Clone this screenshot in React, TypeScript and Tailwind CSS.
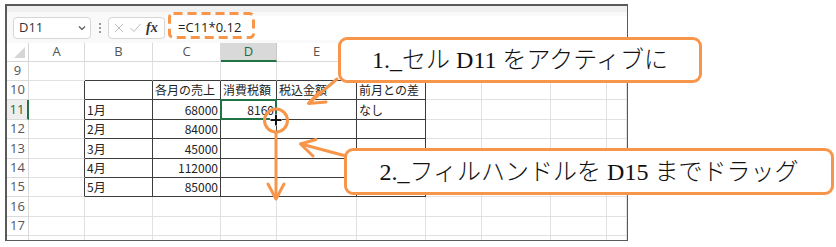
import React from "react";

const ORANGE = "#F7964A";
const colLabels = ["A", "B", "C", "D", "E", "F", "G", "H", "I", ""];
const rows = [9, 10, 11, 12, 13, 14, 15, 16, 17, 18];

type Cell = { text: string; align?: "left" | "right" };
const data: Record<string, Cell> = {
  "10-2": { text: "各月の売上" },
  "10-3": { text: "消費税額" },
  "10-4": { text: "税込金額" },
  "10-5": { text: "前月との差" },
  "11-1": { text: "1月" },
  "12-1": { text: "2月" },
  "13-1": { text: "3月" },
  "14-1": { text: "4月" },
  "15-1": { text: "5月" },
  "11-2": { text: "68000", align: "right" },
  "12-2": { text: "84000", align: "right" },
  "13-2": { text: "45000", align: "right" },
  "14-2": { text: "112000", align: "right" },
  "15-2": { text: "85000", align: "right" },
  "11-3": { text: "8160", align: "right" },
  "11-5": { text: "なし" },
};

function cellClasses(r: number, c: number) {
  const inTable = r >= 10 && r <= 15 && c >= 1 && c <= 5;
  const darkRight = inTable || (c === 0 && r >= 10 && r <= 15);
  const darkBottom = inTable || (r === 9 && c >= 1 && c <= 5);
  return [
    "relative border-r border-b flex items-center px-[2px] text-[12px] leading-none text-[#222] whitespace-nowrap overflow-visible",
    darkRight ? "border-r-[#3c3c3c]" : "border-r-[#e1e1e1]",
    darkBottom ? "border-b-[#3c3c3c]" : "border-b-[#e1e1e1]",
  ].join(" ");
}

export default function App() {
  return (
    <div className="relative w-[836px] h-[247px] bg-white overflow-hidden [font-family:'Noto_Sans_CJK_JP',sans-serif]">
      {/* spreadsheet window */}
      <div className="ml-[5px] mt-[4px] w-[623px] h-[237px] border-l-2 border-t-2 border-r border-b border-[#5a5a5a] flex flex-col overflow-hidden">
        {/* formula bar */}
        <div className="h-[37px] shrink-0 flex items-center bg-[#f9f9f9] border-t-[6px] border-[#f0f0f0]">
          <div className="ml-[6px] w-[78px] h-[22px] bg-white border border-[#d6d6d6] rounded-[4px] flex items-center justify-between pl-[5px] pr-[3px]">
            <span className="text-[13px] text-[#333] [font-family:'Open_Sans',sans-serif]">D11</span>
            <svg width="10" height="10" viewBox="0 0 10 10">
              <path d="M2 3.5 L5 6.5 L8 3.5" fill="none" stroke="#555" strokeWidth="1.2" />
            </svg>
          </div>
          <div className="ml-[7px] w-[3px] flex flex-col gap-[2px] items-center">
            <div className="w-[2px] h-[2px] bg-[#9a9a9a]" />
            <div className="w-[2px] h-[2px] bg-[#9a9a9a]" />
            <div className="w-[2px] h-[2px] bg-[#9a9a9a]" />
          </div>
          <div className="ml-[7px] w-[57px] h-[22px] bg-white border border-[#d6d6d6] rounded-[4px] flex items-center pl-[4px] gap-[4px]">
            <svg width="12" height="12" viewBox="0 0 12 12">
              <path d="M2 2 L10 10 M10 2 L2 10" stroke="#bdbdbd" strokeWidth="1" />
            </svg>
            <svg width="13" height="12" viewBox="0 0 13 12">
              <path d="M1.5 6 L5 9.5 L11.5 2" fill="none" stroke="#bdbdbd" strokeWidth="1" />
            </svg>
            <span className="text-[14px] italic font-semibold text-[#333] leading-none [font-family:'Liberation_Serif',serif]">fx</span>
          </div>
          <div className="ml-[2px] flex-1 h-[24px] bg-white flex items-center pl-[11px]">
            <span className="text-[13px] text-[#222] [font-family:'Open_Sans',sans-serif]">=C11*0.12</span>
          </div>
        </div>

        {/* grid */}
        <div className="h-[197px] overflow-hidden">
          <div className="grid grid-cols-[22px_56px_68px_68px_56px_80px_69px_56px_69px_56px_1fr] grid-rows-[19px_19px_19px_20px_19px_20px_19px_19px_20px_19px_20px]">
            {/* corner */}
            <div className="border-r border-b border-[#d4d4d4] bg-white relative">
              <svg className="absolute right-[3px] bottom-[3px]" width="11" height="11" viewBox="0 0 11 11">
                <path d="M11 0 L11 11 L0 11 Z" fill="#d6d6d6" />
              </svg>
            </div>
            {colLabels.map((l, i) =>
              i === 3 ? (
                <div key={l + i} className="bg-[#d9d9d9] border-r border-[#c8c8c8] border-b-2 border-b-[#217346] flex items-center justify-center text-[13px] text-[#1e6b3f] [font-family:'Open_Sans',sans-serif]">
                  {l}
                </div>
              ) : (
                <div key={l + i} className="bg-white border-r border-b border-[#dadada] flex items-center justify-center text-[13px] text-[#555] [font-family:'Open_Sans',sans-serif]">
                  {l}
                </div>
              )
            )}
            {rows.map((r) => (
              <React.Fragment key={r}>
                {r === 11 ? (
                  <div className="bg-[#eeeeee] border-r-2 border-r-[#217346] border-b border-b-[#dadada] flex items-center justify-center text-[13px] text-[#1e6b3f] [font-family:'Open_Sans',sans-serif]">
                    {r}
                  </div>
                ) : (
                  <div className="bg-white border-r border-b border-[#dadada] flex items-center justify-center text-[13px] text-[#555] [font-family:'Open_Sans',sans-serif]">
                    {r === 18 ? "" : r}
                  </div>
                )}
                {colLabels.map((_, c) => {
                  const d = data[`${r}-${c}`];
                  return (
                    <div
                      key={c}
                      className={cellClasses(r, c) + (d && d.align === "right" ? " justify-end" : "")}
                    >
                      {d ? d.text : ""}
                      {r === 11 && c === 3 ? (
                        <div className="absolute left-[-1px] top-[-1px] right-[-1px] bottom-[-1px] border-2 border-[#217346]" />
                      ) : null}
                    </div>
                  );
                })}
              </React.Fragment>
            ))}
          </div>
        </div>
      </div>

      {/* overlay drawings */}
      <svg className="absolute left-0 top-0 pointer-events-none" width="836" height="247" viewBox="0 0 836 247">
        {/* dashed highlight on formula */}
        <rect x="169.5" y="13.5" width="84" height="24" rx="4" fill="none" stroke={ORANGE} strokeWidth="3" strokeDasharray="9 5" />
        {/* arrow 1 */}
        <path d="M337 79 L309 103" stroke={ORANGE} strokeWidth="3" fill="none" strokeLinecap="round" />
        <path d="M319 92 L308.5 103.5 L326 102" stroke={ORANGE} strokeWidth="3" fill="none" strokeLinecap="round" strokeLinejoin="round" />
        {/* arrow 2 */}
        <path d="M346 156 L301 144" stroke={ORANGE} strokeWidth="3" fill="none" strokeLinecap="round" />
        <path d="M316 139.5 L300.5 144 L313 156" stroke={ORANGE} strokeWidth="3" fill="none" strokeLinecap="round" strokeLinejoin="round" />
        {/* circle + vertical arrow */}
        <circle cx="276" cy="120.5" r="11.5" fill="none" stroke={ORANGE} strokeWidth="3" />
        <path d="M276 132 L276 199" stroke={ORANGE} strokeWidth="3" fill="none" />
        <path d="M268 184 L276 199 L284 184" stroke={ORANGE} strokeWidth="3" fill="none" strokeLinecap="round" strokeLinejoin="round" />
        {/* fill cursor */}
        <path d="M276 114 L276 126 M270 120 L282 120" stroke="#ffffff" strokeWidth="4.5" />
        <path d="M276 114.5 L276 125.5 M270.5 120 L281.5 120" stroke="#111" strokeWidth="2" />
      </svg>

      {/* callout 1 */}
      <div className="absolute left-[338px] top-[37px] w-[364px] h-[46px] bg-white border-[3px] border-[#F7964A] rounded-[9px] flex items-center justify-center">
        <span className="text-[24px] font-light leading-[28px] text-[#111] [font-family:'Liberation_Serif','Noto_Sans_CJK_JP',serif]">
          1._セル D11 をアクティブに
        </span>
      </div>
      {/* callout 2 */}
      <div className="absolute left-[344px] top-[148px] w-[490px] h-[47px] bg-white border-[3px] border-[#F7964A] rounded-[9px] flex items-center justify-center">
        <span className="text-[24px] font-light leading-[28px] text-[#111] [font-family:'Liberation_Serif','Noto_Sans_CJK_JP',serif]">
          2._フィルハンドルを D15 までドラッグ
        </span>
      </div>
    </div>
  );
}
